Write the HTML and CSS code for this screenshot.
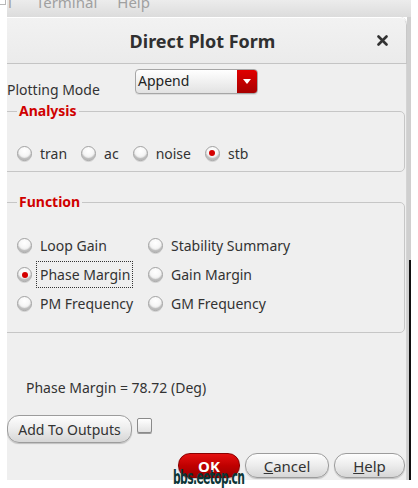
FILE: index.html
```html
<!DOCTYPE html>
<html>
<head>
<meta charset="utf-8">
<link rel="stylesheet" href="styles.css">
</head>
<body>
<div class="screen">
  <div class="gutter"><span class="corner"></span></div>
  <div class="frame">
    <div class="bgmenu"><span class="m1">l</span><span class="m2">Terminal</span><span class="m3">Help</span></div>
    <div class="main">
      <div class="dialog">
        <div class="titlebar">
          <span class="title">Direct Plot Form</span>
          <span class="close"><svg width="11" height="11" viewBox="0 0 11 11"><path d="M1.5 1.5L9.5 9.5M9.5 1.5L1.5 9.5" stroke="#333" stroke-width="2.6" stroke-linecap="round"/></svg></span>
        </div>
        <div class="body">
          <div class="mode-row">
            <span class="mode-label">Plotting Mode</span>
            <div class="combo">
              <span class="combo-text">Append</span>
              <span class="combo-btn"><svg width="8" height="5" viewBox="0 0 8 5"><path d="M0 0H8L4 5Z" fill="#fff"/></svg></span>
            </div>
          </div>
          <fieldset class="group analysis">
            <legend>Analysis</legend>
            <div class="radio-row">
              <span class="opt"><span class="radio"></span><span class="lbl">tran</span></span>
              <span class="opt"><span class="radio"></span><span class="lbl">ac</span></span>
              <span class="opt"><span class="radio"></span><span class="lbl">noise</span></span>
              <span class="opt"><span class="radio on"></span><span class="lbl">stb</span></span>
            </div>
          </fieldset>
          <fieldset class="group function">
            <legend>Function</legend>
            <div class="func-grid">
              <span class="opt"><span class="radio"></span><span class="lbl">Loop Gain</span></span>
              <span class="opt"><span class="radio"></span><span class="lbl">Stability Summary</span></span>
              <span class="opt"><span class="radio on"></span><span class="lbl focus">Phase Margin</span></span>
              <span class="opt"><span class="radio"></span><span class="lbl">Gain Margin</span></span>
              <span class="opt"><span class="radio"></span><span class="lbl">PM Frequency</span></span>
              <span class="opt"><span class="radio"></span><span class="lbl">GM Frequency</span></span>
            </div>
          </fieldset>
          <div class="result">Phase Margin = 78.72 (Deg)</div>
          <div class="outputs-row">
            <button class="btn add">Add To Outputs</button>
            <span class="checkbox"></span>
          </div>
          <div class="actions">
            <button class="btn ok">OK</button>
            <button class="btn cancel"><u>C</u>ancel</button>
            <button class="btn help"><u>H</u>elp</button>
          </div>
        </div>
      </div>
      <div class="side"><span class="side-dark"></span></div>
    </div>
  </div>
  <div class="watermark">bbs.eetop.cn</div>
</div>
</body>
</html>
```

FILE: styles.css
```css
* { box-sizing: border-box; }
html, body { margin: 0; padding: 0; background: #fff; }
body { font-family: "Noto Sans", "DejaVu Sans", sans-serif; color: #333; }

.screen {
  position: relative;
  width: 418px;
  height: 488px;
  overflow: hidden;
  display: flex;
  background: #fff;
}
.gutter { width: 7px; flex: none; position: relative; }
.corner {
  position: absolute; left: -1px; top: -1px;
  width: 7px; height: 6px;
  border: 1px solid #b8b8b8;
}

.frame {
  width: 404px;
  height: 480px;
  flex: none;
  overflow: hidden;
  display: flex;
  flex-direction: column;
}

.bgmenu {
  height: 17px;
  flex: none;
  background: linear-gradient(#ececec, #dcdcdc);
  color: #a0a0a0;
  font-size: 15px;
  line-height: 15px;
  white-space: nowrap;
  overflow: hidden;
}
.bgmenu span { display: inline-block; margin-top: -5px; vertical-align: top; }
.m1 { margin-left: 1px; }
.m2 { margin-left: 24px; }
.m3 { margin-left: 20px; }

.main { flex: 1; display: flex; min-height: 0; }

.dialog {
  width: 409px;
  margin-left: -9px;
  flex: none;
  background: #efefef;
  border-top-right-radius: 7px;
  border-top-left-radius: 7px;
  box-shadow: inset -1px 0 0 #d4d4d4;
  display: flex;
  flex-direction: column;
}

.titlebar {
  height: 47px;
  flex: none;
  display: flex;
  align-items: center;
  justify-content: center;
  position: relative;
  background: linear-gradient(#f2f2f2, #ebebeb);
  border-bottom: 1px solid #c4c4c4;
  border-top-right-radius: 7px;
  border-top-left-radius: 7px;
  box-shadow: inset 0 1px 0 #fff, inset -1px 0 0 #c8c8c8;
}
.title {
  font-size: 18px;
  font-weight: bold;
  color: #303030;
  margin-top: 1px;
}
.close {
  position: absolute;
  right: 19px;
  top: 18px;
  display: flex;
}

.body {
  padding: 0 2px 0 4px;
  font-size: 14px;
}

.mode-row {
  display: flex;
  align-items: flex-start;
  margin-top: 5px;
  height: 25px;
}
.mode-label {
  margin-left: 5px;
  margin-top: 12px;
  line-height: 17px;
  width: 128px;
}
.combo {
  width: 123px;
  height: 25px;
  display: flex;
  border: 1px solid #a6a6a6;
  border-radius: 4px;
  background: linear-gradient(#ffffff, #e2e2e2);
  overflow: hidden;
  box-shadow: 0 1px 0 rgba(0,0,0,0.08);
}
.combo-text { flex: 1; padding-left: 2px; line-height: 22px; color: #222; }
.combo-btn {
  width: 20px;
  background: linear-gradient(#e00000, #a80000);
  display: flex;
  align-items: center;
  justify-content: center;
}

.group {
  margin: 0;
  border: 1px solid #c6c6c6;
  border-radius: 5px;
  padding: 0 0 0 14px;
  min-width: 0;
}
.group legend {
  padding: 0 2px;
  font-weight: bold;
  color: #d00000;
  font-size: 14px;
  line-height: 16px;
}
.analysis { margin-top: 9px; height: 69px; }
.function { margin-top: 22px; height: 139px; }

.radio-row {
  display: flex;
  align-items: center;
  margin-top: 24px;
  height: 20px;
}
.radio-row .opt { margin-right: 11px; }

.opt { display: flex; align-items: center; }
.radio {
  width: 15px; height: 15px;
  border-radius: 50%;
  border: 1px solid #a2a2a2;
  background: radial-gradient(circle at 50% 30%, #ffffff 0%, #f6f6f6 45%, #cfcfcf 100%);
  box-shadow: inset 0 -2px 1px rgba(0,0,0,0.18), 0 1px 0 rgba(0,0,0,0.12);
  margin-right: 4px;
  flex: none;
  position: relative;
}
.radio.on::after {
  content: "";
  position: absolute;
  left: 3.5px; top: 3.5px;
  width: 6px; height: 6px;
  border-radius: 50%;
  background: #d40000;
}
.lbl {
  border: 1px dotted transparent;
  padding: 2px 2px 2px 3px;
  line-height: 21px;
  white-space: nowrap;
}
.lbl.focus { border-color: #333; }

.func-grid {
  display: grid;
  grid-template-columns: 131px auto;
  grid-auto-rows: 29px;
  margin-top: 21px;
  align-items: center;
}

.result {
  margin-top: 45px;
  margin-left: 24px;
  line-height: 19px;
}

.outputs-row {
  display: flex;
  align-items: flex-start;
  margin-top: 18px;
  height: 28px;
  margin-left: 5px;
}
.btn {
  font-family: inherit;
  font-size: 14px;
  color: #333;
  border: 1px solid #9c9c9c;
  border-radius: 12px;
  background: linear-gradient(#fdfdfd, #ececec 50%, #d6d6d6);
  box-shadow: 0 1px 1px rgba(0,0,0,0.2);
  padding: 0;
  margin: 0;
}
.add { width: 125px; height: 28px; }
.checkbox {
  width: 15px; height: 15px;
  margin: 3px 0 0 5px;
  border: 1px solid #8a8a8a;
  border-radius: 2px;
  background: linear-gradient(#ffffff, #e2e2e2);
  box-shadow: 0 1px 0 rgba(0,0,0,0.35);
}

.actions {
  display: flex;
  justify-content: flex-end;
  gap: 5px;
  margin-top: 10px;
  height: 25px;
}
.actions .btn { height: 25px; }
.ok {
  width: 62px;
  background: linear-gradient(#e41010, #c00000 50%, #9c0000);
  border-color: #8a0000;
  color: #fff;
  font-weight: bold;
  font-size: 15px;
}
.cancel { width: 84px; font-size: 15px; }
.help { width: 71px; font-size: 15px; }

.side {
  width: 4px;
  flex: none;
  background: #cfcfcf;
  position: relative;
}
.side-dark {
  position: absolute;
  left: 2px; top: 243px; bottom: 0;
  width: 2px;
  background: #111;
}

.watermark {
  position: absolute;
  left: 173px;
  top: 466px;
  font-family: "DejaVu Sans Condensed", "DejaVu Sans", sans-serif;
  font-weight: bold;
  font-size: 19px;
  color: #0b3636;
  letter-spacing: -1px;
  transform: scaleX(0.63);
  transform-origin: left top;
  line-height: 22px;
}
```
